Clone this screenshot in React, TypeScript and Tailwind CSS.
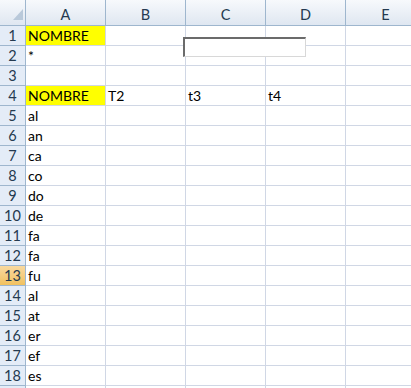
import React from "react";

const cols = ["A", "B", "C", "D", "E"];
const rows: Record<number, Record<string, string>> = {
  1: { A: "NOMBRE" },
  2: { A: "*" },
  4: { A: "NOMBRE", B: "T2", C: "t3", D: "t4" },
  5: { A: "al" },
  6: { A: "an" },
  7: { A: "ca" },
  8: { A: "co" },
  9: { A: "do" },
  10: { A: "de" },
  11: { A: "fa" },
  12: { A: "fa" },
  13: { A: "fu" },
  14: { A: "al" },
  15: { A: "at" },
  16: { A: "er" },
  17: { A: "ef" },
  18: { A: "es" },
};
const yellow = new Set(["1A", "4A"]);

export default function App() {
  const nums = Array.from({ length: 19 }, (_, i) => i + 1);
  return (
    <div
      className="relative w-[411px] h-[388px] overflow-hidden bg-white text-black"
      style={{ fontFamily: "Lato, 'Open Sans', sans-serif" }}
    >
      <div className="grid grid-cols-[26px_80px_80px_80px_80px_80px] w-[426px]">
        {/* corner */}
        <div className="relative h-[26px] border-r border-b border-[#9eb6ce] bg-gradient-to-b from-[#f7f9fc] to-[#dfe7f1]">
          <svg className="absolute left-[13px] top-[9px]" width="10" height="11" viewBox="0 0 10 11">
            <polygon points="10,0 10,11 0,11" fill="#b9c9da" />
          </svg>
        </div>
        {cols.map((c) => (
          <div
            key={c}
            className="h-[26px] flex items-center justify-center border-r border-b border-[#9eb6ce] bg-gradient-to-b from-[#f7f9fc] to-[#dfe7f1] text-[14.5px] text-[#253a50] pt-[5px]"
          >
            {c}
          </div>
        ))}
        {nums.map((n) => (
          <React.Fragment key={n}>
            <div
              className={
                n === 13
                  ? "h-[20px] flex items-end justify-center border-r border-b border-[#9eb6ce] bg-gradient-to-b from-[#f9d99f] to-[#f1c15f] text-[14.5px] leading-[19px] text-[#253a50]"
                  : "h-[20px] flex items-end justify-center border-r border-b border-[#9eb6ce] bg-[#e4ecf7] text-[14.5px] leading-[19px] text-[#253a50]"
              }
            >
              {n}
            </div>
            {cols.map((c) => {
              const v = rows[n]?.[c] ?? "";
              return (
                <div
                  key={c}
                  className={
                    yellow.has(`${n}${c}`)
                      ? "h-[20px] flex items-end border-r border-b border-[#d0d7e5] bg-[#ffff00] pl-[2px] text-[14px] leading-[19px]"
                      : "h-[20px] flex items-end border-r border-b border-[#d0d7e5] pl-[2px] text-[14px] leading-[19px]"
                  }
                >
                  {v}
                </div>
              );
            })}
          </React.Fragment>
        ))}
      </div>
      {/* text box overlay */}
      <div className="absolute left-[183px] top-[37px] w-[123px] h-[20px] bg-white border-t-2 border-l-2 border-t-[#6b6b6b] border-l-[#6b6b6b] border-r border-b border-r-[#d8d8d8] border-b-[#d8d8d8]" />
    </div>
  );
}
